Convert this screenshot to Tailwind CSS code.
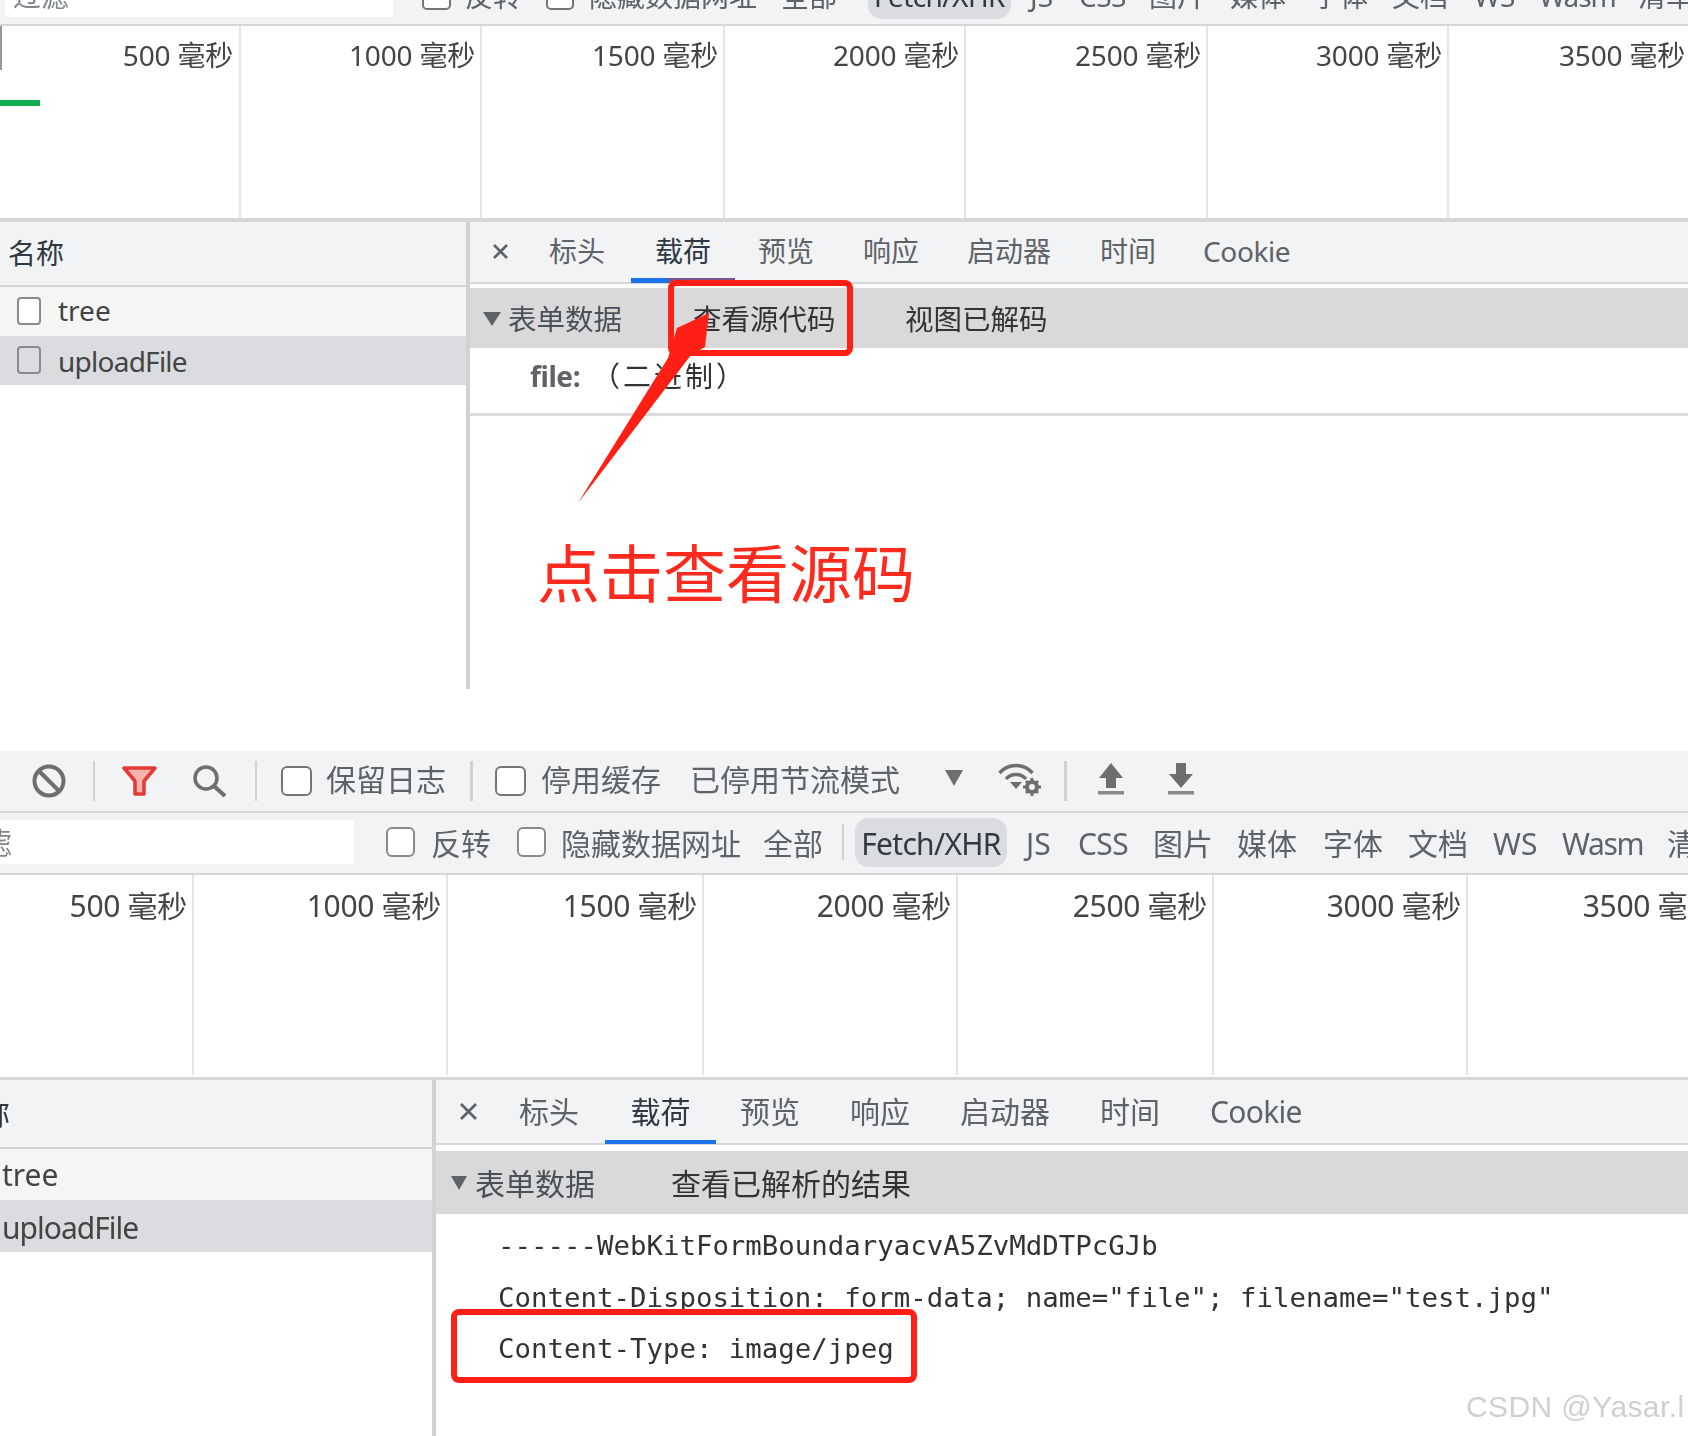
<!DOCTYPE html>
<html lang="zh-CN">

<head>
    <meta charset="UTF-8">
    <title>Network payload</title>
    <script src="https://cdn.jsdelivr.net/npm/@tailwindcss/browser@4"></script>
</head>

<body class="relative w-[1688px] h-[1436px] overflow-hidden bg-white text-[#5f6368] font-['Noto_Sans','Noto_Sans_CJK_SC',sans-serif]">
    <div class="blur-[0.5px]">

        <!-- first capture -->
        <section class="h-[689px] overflow-hidden">
            <div class="flex items-center h-[58px] -mt-[32px] pl-[5px] bg-[#f1f3f4] border-b-2 border-[#d5d6d8] text-[28px] whitespace-nowrap overflow-hidden">
                <div class="flex items-center w-[388px] h-[42px] shrink-0 pl-[8px] bg-white text-[#80868b]">过滤</div>
                <div class="ml-[29px] w-[29px] h-[28px] shrink-0 rounded-[5px] border-[2.5px] border-[#757575] bg-white"></div>
                <span class="ml-[14px] w-[57px] shrink-0">反转</span>
                <div class="ml-[24px] w-[28px] h-[28px] shrink-0 rounded-[5px] border-[2.5px] border-[#757575] bg-white"></div>
                <span class="ml-[15px] w-[170px] shrink-0">隐藏数据网址</span>
                <span class="ml-[22px] w-[56px] shrink-0">全部</span>
                <div class="ml-[31px] w-[143px] h-[46px] shrink-0 flex items-center justify-center rounded-[14px] bg-[#dadce0] text-[#303942] tracking-[-0.6px]">Fetch/XHR</div>
                <span class="ml-[19px] w-[21px] shrink-0">JS</span>
                <span class="ml-[28px] w-[45px] shrink-0 tracking-[-0.5px]">CSS</span>
                <span class="ml-[25px] w-[56px] shrink-0">图片</span>
                <span class="ml-[25px] w-[56px] shrink-0">媒体</span>
                <span class="ml-[26px] w-[56px] shrink-0">字体</span>
                <span class="ml-[24px] w-[56px] shrink-0">文档</span>
                <span class="ml-[26px] w-[40px] shrink-0">WS</span>
                <span class="ml-[25px] w-[73px] shrink-0 tracking-[-1px]">Wasm</span>
                <span class="ml-[26px] shrink-0">清单</span>
            </div>

            <div class="relative flex h-[192px] text-[28px] leading-[40px] text-[#444] text-right tracking-[-0.2px] whitespace-nowrap">
                <div class="absolute left-0 top-0 w-[2px] h-[44px] bg-[#9a9a9a]"></div>
                <div class="absolute left-0 top-[74px] w-[40px] h-[6px] bg-[#12ad4f]"></div>
                <div class="w-[241px] shrink-0 pt-[9px] pr-[6px] border-r-2 border-[#e3e4e6]">500 毫秒</div>
                <div class="w-[241px] shrink-0 pt-[9px] pr-[5px] border-r-2 border-[#e3e4e6]">1000 毫秒</div>
                <div class="w-[243px] shrink-0 pt-[9px] pr-[5px] border-r-2 border-[#e3e4e6]">1500 毫秒</div>
                <div class="w-[241px] shrink-0 pt-[9px] pr-[5px] border-r-2 border-[#e3e4e6]">2000 毫秒</div>
                <div class="w-[242px] shrink-0 pt-[9px] pr-[5px] border-r-2 border-[#e3e4e6]">2500 毫秒</div>
                <div class="w-[241px] shrink-0 pt-[9px] pr-[5px] border-r-2 border-[#e3e4e6]">3000 毫秒</div>
                <div class="w-[241px] shrink-0 pt-[9px] pr-[5px]">3500 毫秒</div>
            </div>

            <div class="flex h-[471px] border-t-4 border-[#d5d6d8]">
                <div class="w-[466px] shrink-0 text-[28px]">
                    <div class="flex items-center h-[65px] pl-[8px] pb-[2px] bg-[#f1f3f4] border-b-2 border-[#d5d6d8] text-[#303942]">名称</div>
                    <div class="flex items-center h-[49px] pl-[17px] bg-[#f5f5f5] text-[#444]">
                        <div class="w-[24px] h-[28px] -mt-[2px] rounded-[4px] border-[2.5px] border-[#8a8a8a] bg-white"></div>
                        <span class="ml-[17px] -mt-[4px]">tree</span>
                    </div>
                    <div class="flex items-center h-[49px] pl-[17px] bg-[#dadce0] text-[#444]">
                        <div class="w-[24px] h-[28px] -mt-[2px] rounded-[4px] border-[2.5px] border-[#8a8a8a]"></div>
                        <span class="ml-[17px] tracking-[-0.75px]">uploadFile</span>
                    </div>
                </div>
                <div class="w-[4px] shrink-0 bg-[#d0d2d6]"></div>
                <div class="flex-1 text-[28px]">
                    <div class="flex items-center h-[62px] pl-[22px] pb-[2px] bg-[#f1f3f4] border-b-2 border-[#d5d6d8] whitespace-nowrap">
                        <svg class="w-[17px] h-[15px] shrink-0" viewBox="0 0 17 15"><path d="M2 1 L15 14 M15 1 L2 14" stroke="#5f6368" stroke-width="2.6" /></svg>
                        <span class="ml-[40px]">标头</span>
                        <div class="relative ml-[26px] w-[104px] h-full flex items-center justify-center text-[#303942]">载荷
                            <div class="absolute left-0 bottom-[-3px] w-[104px] h-[5px] bg-[linear-gradient(90deg,#1a73e8_36%,#76548f_36%)]"></div>
                        </div>
                        <span class="ml-[23px]">预览</span>
                        <span class="ml-[49px]">响应</span>
                        <span class="ml-[48px]">启动器</span>
                        <span class="ml-[49px]">时间</span>
                        <span class="ml-[47px] tracking-[-0.4px]">Cookie</span>
                    </div>
                    <div class="flex items-center h-[60px] mt-[4px] pt-[2px] bg-[#d9d9d9] text-[28.5px] text-[#333]">
                        <svg class="ml-[13px] w-[18px] h-[14px] shrink-0" viewBox="0 0 18 14"><polygon points="0,0 18,0 9,14" fill="#5f6368" /></svg>
                        <span class="ml-[7px] w-[114px] text-[#4a5058] whitespace-nowrap">表单数据</span>
                        <span class="ml-[71px] w-[142px] whitespace-nowrap">查看源代码</span>
                        <span class="ml-[70px] whitespace-nowrap">视图已解码</span>
                    </div>
                    <div class="flex items-center h-[68px] pb-[9px] pl-[60px] border-b-[3px] border-[#dcdcdc] text-[#333]">
                        <span class="w-[62px] font-bold text-[#5f6368] tracking-[-0.4px]">file:</span>
                        <span class="tracking-[3px]">（二进制）</span>
                    </div>
                </div>
            </div>
        </section>

        <!-- second capture -->
        <section class="mt-[62px] h-[685px] overflow-hidden text-[30px]">
            <div class="flex items-center h-[62px] pl-[32px] bg-[#f1f3f4] border-b-2 border-[#d5d6d8] whitespace-nowrap">
                <svg class="w-[34px] h-[34px] shrink-0" viewBox="0 0 34 34" fill="none"><circle cx="17" cy="17" r="14.5" stroke="#6e6e6e" stroke-width="4" /><path d="M7 7 L27 27" stroke="#6e6e6e" stroke-width="4" /></svg>
                <div class="ml-[27px] w-[2px] h-[40px] shrink-0 bg-[#cfd1d4]"></div>
                <svg class="ml-[27px] w-[35px] h-[30px] shrink-0" viewBox="0 0 35 30"><path d="M2 2 H33 L22 15 V28 H13 V15 Z" fill="#f3b3af" stroke="#e53935" stroke-width="3.5" stroke-linejoin="round" /></svg>
                <svg class="ml-[35px] w-[35px] h-[34px] shrink-0" viewBox="0 0 35 34" fill="none"><circle cx="14" cy="14" r="11" stroke="#6e6e6e" stroke-width="3.5" /><path d="M22 22 L33 32" stroke="#6e6e6e" stroke-width="4" /></svg>
                <div class="ml-[28px] w-[2px] h-[40px] shrink-0 bg-[#cfd1d4]"></div>
                <div class="ml-[24px] w-[31px] h-[30px] shrink-0 rounded-[6px] border-[2.5px] border-[#757575] bg-white"></div>
                <span class="ml-[14px] w-[120px] -mt-[4px]">保留日志</span>
                <div class="ml-[24px] w-[3px] h-[40px] shrink-0 bg-[#cfd1d4]"></div>
                <div class="ml-[22px] w-[31px] h-[30px] shrink-0 rounded-[6px] border-[2.5px] border-[#757575] bg-white"></div>
                <span class="ml-[15px] w-[120px] -mt-[4px]">停用缓存</span>
                <span class="ml-[29px] w-[210px] -mt-[4px]">已停用节流模式</span>
                <svg class="ml-[45px] w-[18px] h-[16px] shrink-0 -mt-[6px]" viewBox="0 0 18 16"><polygon points="0,0 18,0 9,16" fill="#6e6e6e" /></svg>
                <svg class="ml-[35px] w-[44px] h-[34px] shrink-0 -mt-[4px]" viewBox="0 0 44 34" fill="none">
                    <path d="M1.5 11 C10 1 26 1 34.5 11" stroke="#6e6e6e" stroke-width="3.5" />
                    <path d="M8 17 C13 11 23 11 28 17" stroke="#6e6e6e" stroke-width="3.5" />
                    <polygon points="12,20 24,20 18,27" fill="#6e6e6e" />
                    <circle cx="34" cy="25" r="5" stroke="#6e6e6e" stroke-width="4" />
                    <path d="M34 16 V19 M34 31 V34 M25 25 H28 M40 25 H43 M28 19 L30 21 M38 29 L40 31 M40 19 L38 21 M30 29 L28 31" stroke="#6e6e6e" stroke-width="3" />
                </svg>
                <div class="ml-[22px] w-[3px] h-[40px] shrink-0 bg-[#cfd1d4]"></div>
                <svg class="ml-[31px] w-[26px] h-[32px] shrink-0 -mt-[4px]" viewBox="0 0 26 32"><polygon points="13,0 25,15 18,15 18,25 8,25 8,15 1,15" fill="#6e6e6e" /><rect x="0" y="28" width="26" height="3.5" fill="#8a8a8a" /></svg>
                <svg class="ml-[44px] w-[26px] h-[32px] shrink-0 -mt-[4px]" viewBox="0 0 26 32"><polygon points="8,0 18,0 18,11 25,11 13,25 1,11 8,11" fill="#6e6e6e" /><rect x="0" y="28" width="26" height="3.5" fill="#8a8a8a" /></svg>
            </div>

            <div class="flex items-center h-[62px] pb-[2px] bg-[#f1f3f4] border-b-2 border-[#d5d6d8] whitespace-nowrap overflow-hidden">
                <div class="flex items-center w-[354px] h-[44px] shrink-0 bg-white overflow-hidden text-[#80868b]"><span class="-ml-[18px]">滤</span></div>
                <div class="ml-[32px] w-[29px] h-[30px] shrink-0 rounded-[6px] border-[2.5px] border-[#8a8a8a] bg-white"></div>
                <span class="ml-[16px] w-[60px] shrink-0 mt-[3px]">反转</span>
                <div class="ml-[26px] w-[29px] h-[30px] shrink-0 rounded-[6px] border-[2.5px] border-[#8a8a8a] bg-white"></div>
                <span class="ml-[15px] w-[180px] shrink-0 mt-[3px]">隐藏数据网址</span>
                <span class="ml-[22px] w-[60px] shrink-0 mt-[3px]">全部</span>
                <div class="ml-[19px] w-[2px] h-[36px] shrink-0 bg-[#cfd1d4]"></div>
                <div class="ml-[11px] w-[152px] h-[49px] shrink-0 flex items-center justify-center pt-[3px] rounded-[14px] bg-[#dadce0] text-[#303942] tracking-[-0.7px]">Fetch/XHR</div>
                <span class="ml-[19px] w-[25px] shrink-0 mt-[3px]">JS</span>
                <span class="ml-[27px] w-[49px] shrink-0 mt-[3px] tracking-[-0.6px]">CSS</span>
                <span class="ml-[26px] w-[60px] shrink-0 mt-[3px]">图片</span>
                <span class="ml-[24px] w-[60px] shrink-0 mt-[3px]">媒体</span>
                <span class="ml-[26px] w-[60px] shrink-0 mt-[3px]">字体</span>
                <span class="ml-[25px] w-[60px] shrink-0 mt-[3px]">文档</span>
                <span class="ml-[25px] w-[43px] shrink-0 mt-[3px]">WS</span>
                <span class="ml-[26px] w-[80px] shrink-0 mt-[3px] tracking-[-1.3px]">Wasm</span>
                <span class="ml-[25px] shrink-0 mt-[3px]">清单</span>
            </div>

            <div class="flex h-[202px] pb-[2px] leading-[40px] text-[#444] text-right tracking-[-0.3px] whitespace-nowrap">
                <div class="w-[194px] shrink-0 pt-[11px] pr-[5px] border-r-2 border-[#e3e4e6]">500 毫秒</div>
                <div class="w-[254px] shrink-0 pt-[11px] pr-[5px] border-r-2 border-[#e3e4e6]">1000 毫秒</div>
                <div class="w-[256px] shrink-0 pt-[11px] pr-[5px] border-r-2 border-[#e3e4e6]">1500 毫秒</div>
                <div class="w-[254px] shrink-0 pt-[11px] pr-[5px] border-r-2 border-[#e3e4e6]">2000 毫秒</div>
                <div class="w-[256px] shrink-0 pt-[11px] pr-[5px] border-r-2 border-[#e3e4e6]">2500 毫秒</div>
                <div class="w-[254px] shrink-0 pt-[11px] pr-[5px] border-r-2 border-[#e3e4e6]">3000 毫秒</div>
                <div class="w-[254px] shrink-0 pt-[11px] pr-[5px]">3500 毫秒</div>
            </div>

            <div class="flex h-[359px] border-t-[3px] border-[#d5d6d8]">
                <div class="w-[432px] shrink-0">
                    <div class="flex items-center h-[69px] pl-0 bg-[#f1f3f4] border-b-2 border-[#d5d6d8] text-[#303942] overflow-hidden"><span class="-ml-[50px] whitespace-nowrap">名称</span></div>
                    <div class="flex items-center h-[51px] pl-[2px] bg-[#f5f5f5] text-[#444]">tree</div>
                    <div class="flex items-center h-[52px] pl-[2px] pt-[2px] bg-[#dadce0] text-[#444] tracking-[-1px]">uploadFile</div>
                </div>
                <div class="w-[4px] shrink-0 bg-[#d0d2d6]"></div>
                <div class="flex-1">
                    <div class="flex items-center h-[65px] pl-[23px] bg-[#f1f3f4] border-b-2 border-[#d5d6d8] whitespace-nowrap">
                        <svg class="w-[19px] h-[17px] shrink-0" viewBox="0 0 19 17"><path d="M2 1 L17 16 M17 1 L2 16" stroke="#5f6368" stroke-width="2.8" /></svg>
                        <span class="ml-[41px]">标头</span>
                        <div class="relative ml-[26px] w-[111px] h-full flex items-center justify-center text-[#303942]">载荷
                            <div class="absolute left-0 bottom-[-1px] w-[111px] h-[4px] bg-[#1a73e8]"></div>
                        </div>
                        <span class="ml-[24px]">预览</span>
                        <span class="ml-[50px]">响应</span>
                        <span class="ml-[50px]">启动器</span>
                        <span class="ml-[50px]">时间</span>
                        <span class="ml-[50px] tracking-[-0.7px]">Cookie</span>
                    </div>
                    <div class="flex items-center h-[63px] mt-[6px] pt-[1px] bg-[#d9d9d9]">
                        <svg class="ml-[15px] w-[16px] h-[14px] shrink-0" viewBox="0 0 16 14"><polygon points="0,0 16,0 8,14" fill="#5f6368" /></svg>
                        <span class="ml-[8px] w-[120px] text-[#4a5058]">表单数据</span>
                        <span class="ml-[76px] text-[#333]">查看已解析的结果</span>
                    </div>
                    <div class="mt-[6px] pl-[62px] font-['DejaVu_Sans_Mono','Liberation_Mono',monospace] text-[27.4px] leading-[51.5px] text-[#333] whitespace-nowrap">
                        <div>------WebKitFormBoundaryacvA5ZvMdDTPcGJb</div>
                        <div>Content-Disposition: form-data; name="file"; filename="test.jpg"</div>
                        <div>Content-Type: image/jpeg</div>
                    </div>
                </div>
            </div>
        </section>
    </div>

    <!-- red annotations on top of the captures -->
    <div class="absolute left-[668px] top-[280px] w-[185px] h-[76px] rounded-[8px] border-[6px] border-[#ff1f14] blur-[0.4px]"></div>
    <svg class="absolute left-[570px] top-[305px] w-[150px] h-[205px] blur-[0.4px]" viewBox="570 305 150 205">
        <polygon points="578,503 668,358 677,328 709,313 705,347 691,355" fill="#ff1f14" />
    </svg>
    <div class="absolute left-[537px] top-[538px] text-[63px] leading-[63px] text-[#ff2a1e] whitespace-nowrap font-['Noto_Sans_CJK_SC',sans-serif] blur-[0.4px]">点击查看源码</div>
    <div class="absolute left-[451px] top-[1309px] w-[466px] h-[74px] rounded-[8px] border-[6px] border-[#ff1f14] blur-[0.4px]"></div>
    <div class="absolute left-[1466px] top-[1387px] text-[30px] leading-[40px] text-[#cfcfcf] tracking-[0.4px] whitespace-nowrap font-['Liberation_Sans',sans-serif] blur-[0.5px]">CSDN @Yasar.l</div>
</body>

</html>
